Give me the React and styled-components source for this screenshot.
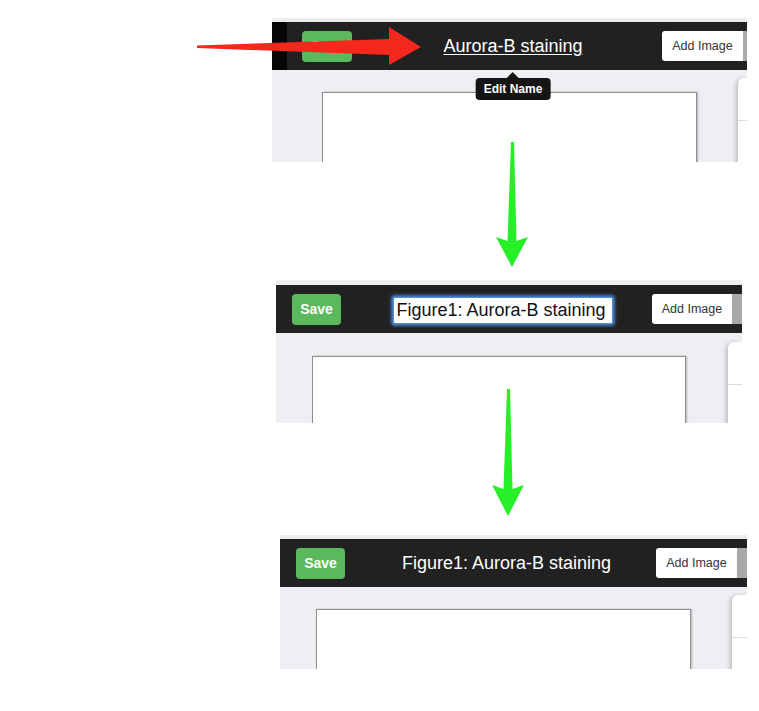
import React from "react"
import styled, { createGlobalStyle } from "styled-components"

const GlobalStyle = createGlobalStyle`
    html, body {
        margin: 0;
        padding: 0;
        background: #fff;
    }
    body {
        font-family: "Liberation Sans", Arial, sans-serif;
    }
`

const Stage = styled.div`
    position: relative;
    width: 759px;
    height: 711px;
    overflow: hidden;
    display: flex;
    flex-direction: column;
    align-items: flex-start;
`

// one cropped screenshot of the figure editor
const Shot = styled.section`
    flex-shrink: 0;
    margin-top: ${p => p.$top}px;
    margin-left: ${p => p.$left}px;
    width: ${p => p.$width}px;
    display: flex;
    flex-direction: column;
    background: #eeeff2;
`

const TopStrip = styled.div`
    height: ${p => p.$h}px;
    background: #ededed;
`

const Toolbar = styled.header`
    height: 48px;
    background: #212121;
    display: flex;
    align-items: center;
`

const EdgeShade = styled.div`
    align-self: stretch;
    width: 15px;
    background: #060606;
`

const SaveButton = styled.button`
    flex-shrink: 0;
    margin-left: ${p => p.$inset}px;
    width: ${p => p.$w}px;
    height: 31px;
    padding: 0;
    border: none;
    border-radius: 4px;
    background: #5cb85c;
    color: #fff;
    font: bold 14px "Liberation Sans", Arial, sans-serif;
`

const TitleSlot = styled.div`
    flex: 1;
    align-self: stretch;
    display: flex;
    justify-content: center;
    padding-left: 12px;
`

const TitleAnchor = styled.div`
    position: relative;
    display: flex;
    align-items: center;
`

const Title = styled.span`
    color: #fff;
    font-size: 18px;
    line-height: 20px;
    white-space: nowrap;
    text-decoration: ${p => (p.$link ? "underline" : "none")};
    text-underline-offset: 2px;
`

const NameInput = styled.input`
    width: 220px;
    height: 27px;
    box-sizing: border-box;
    margin-top: 3px;
    padding: 0 3px;
    border: 1px solid #4a8fe0;
    border-radius: 2px;
    outline: none;
    box-shadow: 0 0 3px 2px rgba(82, 152, 240, 0.8);
    background: #fff;
    color: #111;
    font: 18px "Liberation Sans", Arial, sans-serif;
`

const Tooltip = styled.div`
    position: absolute;
    z-index: 2;
    top: calc(100% + 8px);
    left: 50%;
    transform: translateX(-50%);
    height: 22px;
    padding: 0 8px;
    border-radius: 4px;
    background: #151515;
    color: #fff;
    font: bold 12px/22px "Liberation Sans", Arial, sans-serif;
    white-space: nowrap;

    &::before {
        content: "";
        position: absolute;
        top: -6px;
        left: 50%;
        margin-left: -6px;
        border: 6px solid transparent;
        border-top: 0;
        border-bottom-color: #151515;
    }
`

const AddImageButton = styled.button`
    flex-shrink: 0;
    width: ${p => p.$w}px;
    height: 30px;
    padding: 0;
    border: none;
    border-radius: 3px 0 0 3px;
    background: #fff;
    color: #333;
    font: 12.5px "Liberation Sans", Arial, sans-serif;
`

const NextButtonStub = styled.div`
    flex-shrink: 0;
    width: ${p => p.$w}px;
    height: 30px;
    background: #a8a8a8;
`

const Workspace = styled.div`
    height: ${p => p.$h}px;
    overflow: hidden;
    display: flex;
    align-items: flex-end;
    padding-left: ${p => p.$inset}px;
`

const Sheet = styled.div`
    flex-shrink: 0;
    box-sizing: border-box;
    width: ${p => p.$w}px;
    height: ${p => p.$h + 4}px;
    margin-bottom: -4px;
    background: #fff;
    border: 1px solid #8e8e8e;
    border-bottom: none;
    box-shadow: 1px 0 2px rgba(0, 0, 0, 0.25);
`

const SidePanel = styled.aside`
    flex: 1;
    margin-left: ${p => p.$gap}px;
    height: ${p => p.$h + 6}px;
    margin-bottom: -6px;
    background: #fff;
    border-radius: 6px 0 0 0;
    box-shadow: -2px 1px 5px rgba(0, 0, 0, 0.22);
`

const SidePanelHead = styled.div`
    height: 42px;
    border-bottom: 1px solid #dcdcdc;
`

const ArrowLayer = styled.svg`
    position: absolute;
    top: 0;
    left: 0;
    z-index: 5;
    pointer-events: none;
`

const shots = [
    {
        top: 18, left: 272, width: 475, strip: 4, shade: true, saveInset: 15, saveW: 50,
        addW: 81, stubW: 4, body: 92, sheetInset: 50, sheetW: 375, sheetTop: 22, gap: 41, cardTop: 8,
        mode: "link",
    },
    {
        top: 118, left: 276, width: 466, strip: 5, shade: false, saveInset: 16, saveW: 49,
        addW: 80, stubW: 10, body: 90, sheetInset: 36, sheetW: 374, sheetTop: 23, gap: 42, cardTop: 9,
        mode: "edit",
    },
    {
        top: 112, left: 280, width: 467, strip: 4, shade: false, saveInset: 16, saveW: 49,
        addW: 81, stubW: 10, body: 82, sheetInset: 36, sheetW: 375, sheetTop: 22, gap: 41, cardTop: 8,
        mode: "done",
    },
]

const EditorShot = ({ s }) => (
    <Shot $top={s.top} $left={s.left} $width={s.width}>
        <TopStrip $h={s.strip} />
        <Toolbar>
            {s.shade && <EdgeShade />}
            <SaveButton $inset={s.saveInset} $w={s.saveW}>Save</SaveButton>
            <TitleSlot>
                <TitleAnchor>
                    {s.mode === "link" && <Title $link>Aurora-B staining</Title>}
                    {s.mode === "link" && <Tooltip>Edit Name</Tooltip>}
                    {s.mode === "edit" && <NameInput defaultValue="Figure1: Aurora-B staining" />}
                    {s.mode === "done" && <Title>Figure1: Aurora-B staining</Title>}
                </TitleAnchor>
            </TitleSlot>
            <AddImageButton $w={s.addW}>Add Image</AddImageButton>
            <NextButtonStub $w={s.stubW} />
        </Toolbar>
        <Workspace $h={s.body} $inset={s.sheetInset}>
            <Sheet $w={s.sheetW} $h={s.body - s.sheetTop} />
            <SidePanel $gap={s.gap} $h={s.body - s.cardTop}>
                <SidePanelHead />
            </SidePanel>
        </Workspace>
    </Shot>
)

const App = () => (
    <>
        <GlobalStyle />
        <Stage>
            {shots.map((s, i) => <EditorShot key={i} s={s} />)}
            <ArrowLayer width="759" height="711" viewBox="0 0 759 711">
                <polygon
                    fill="#f4281c"
                    points="197,45.5 389,39 389,27 421,47 389,65 389,55 197,48"
                />
                <polygon
                    fill="#27ef27"
                    points="511,142 514,142 516.5,241 528,237 512,267 496,237 507.5,241"
                />
                <polygon
                    fill="#27ef27"
                    points="507,389 510,389 512.5,489 524,485 508,516 492,485 503.5,489"
                />
            </ArrowLayer>
        </Stage>
    </>
)

export default App
